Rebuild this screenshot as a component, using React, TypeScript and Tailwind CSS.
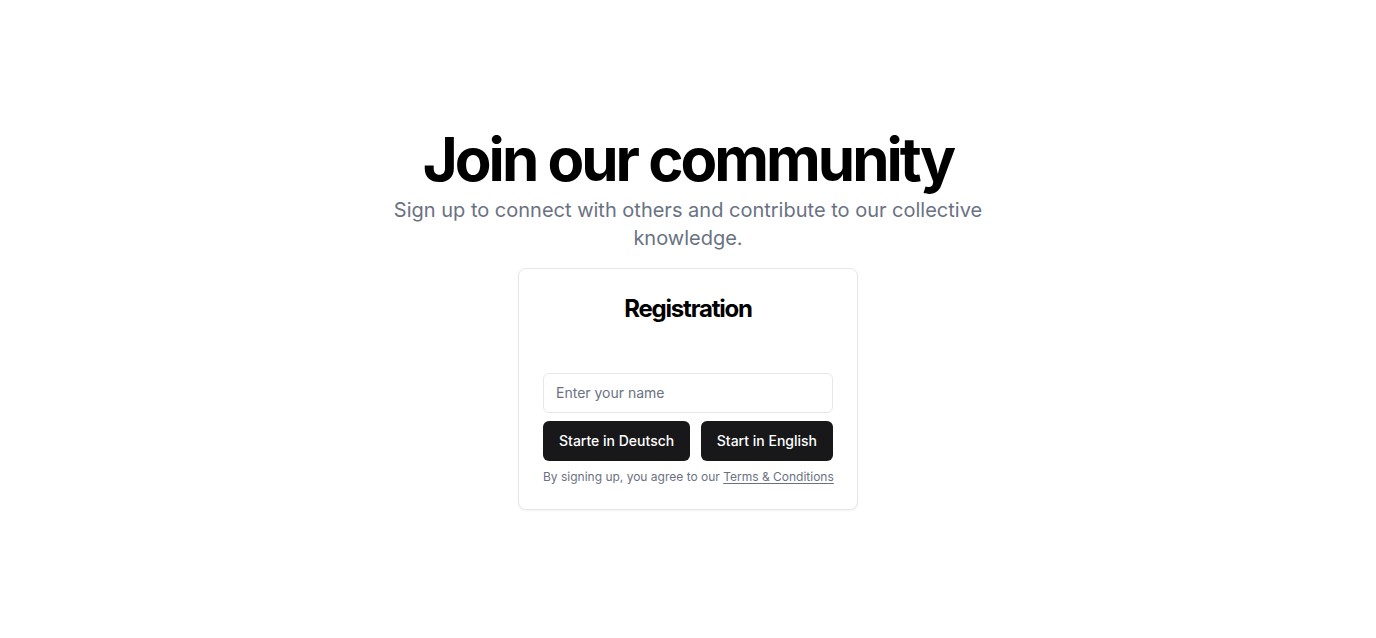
export default function App() {
  return (
    <div
      className="flex min-h-screen w-full items-center justify-center bg-white"
      style={{ fontFamily: "Inter, 'Noto Sans', sans-serif" }}
    >
      <div className="flex flex-col items-center text-center">
        <h1 className="text-6xl/none font-bold tracking-tighter text-black">
          Join our community
        </h1>
        <p className="mt-[7px] max-w-[600px] text-xl text-gray-500">
          Sign up to connect with others and contribute to our collective
          knowledge.
        </p>
        <div className="mt-4 w-[340px] rounded-lg border border-gray-200 bg-white p-6 text-left shadow-xs">
          <h2 className="text-center text-2xl font-bold tracking-tighter text-black">
            Registration
          </h2>
          <div className="mt-12 flex flex-col gap-2">
            <input
              className="h-10 w-full rounded-md border border-gray-200 px-3 text-sm text-gray-900 placeholder:text-gray-500 focus:outline-none"
              placeholder="Enter your name"
            />
            <div className="flex justify-between">
              <button className="h-10 rounded-md bg-[#18181b] px-4 text-sm font-medium text-white">
                Starte in Deutsch
              </button>
              <button className="h-10 rounded-md bg-[#18181b] px-4 text-sm font-medium text-white">
                Start in English
              </button>
            </div>
            <p className="whitespace-nowrap text-xs text-gray-500">
              By signing up, you agree to our{" "}
              <a href="#" className="underline underline-offset-2">
                Terms &amp; Conditions
              </a>
            </p>
          </div>
        </div>
      </div>
    </div>
  );
}
